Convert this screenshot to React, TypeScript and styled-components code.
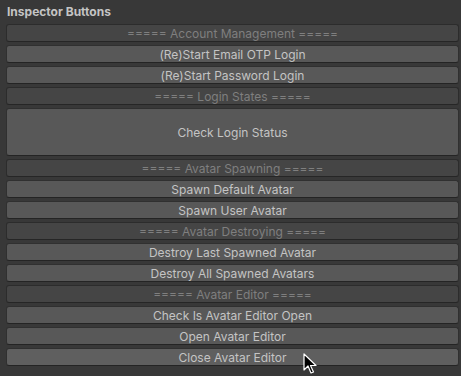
import styled, { createGlobalStyle } from "styled-components";

const GlobalStyle = createGlobalStyle`
  html, body {
    margin: 0;
    padding: 0;
    background: #383838;
  }
  body {
    font-family: Inter, "Noto Sans", sans-serif;
  }
`;

type Row = { text: string; kind: "label" | "button" | "big"; hover?: boolean };

const rows: Row[] = [
  { text: "===== Account Management =====", kind: "label" },
  { text: "(Re)Start Email OTP Login", kind: "button" },
  { text: "(Re)Start Password Login", kind: "button" },
  { text: "===== Login States =====", kind: "label" },
  { text: "Check Login Status", kind: "big" },
  { text: "===== Avatar Spawning =====", kind: "label" },
  { text: "Spawn Default Avatar", kind: "button" },
  { text: "Spawn User Avatar", kind: "button" },
  { text: "===== Avatar Destroying =====", kind: "label" },
  { text: "Destroy Last Spawned Avatar", kind: "button" },
  { text: "Destroy All Spawned Avatars", kind: "button" },
  { text: "===== Avatar Editor =====", kind: "label" },
  { text: "Check Is Avatar Editor Open", kind: "button" },
  { text: "Open Avatar Editor", kind: "button" },
  { text: "Close Avatar Editor", kind: "button", hover: true },
];

const Cursor = () => (
  <CursorWrap>
    <svg width="14" height="22" viewBox="0 0 14 22">
      <path
        d="M1 1 L1 17 L5 13 L8 20 L10.5 19 L7.5 12.5 L13 12.5 Z"
        fill="#000"
        stroke="#fff"
        strokeWidth="1.2"
        strokeLinejoin="round"
      />
    </svg>
  </CursorWrap>
);

export default function App() {
  return (
    <>
      <GlobalStyle />
      <Panel>
        <Header>Inspector Buttons</Header>
        <List>
          {rows.map((r) => (
            <Button key={r.text} $kind={r.kind} $hover={!!r.hover}>
              {r.text}
            </Button>
          ))}
        </List>
        <Cursor />
      </Panel>
    </>
  );
}

const Panel = styled.div`
  position: relative;
  width: 461px;
  height: 376px;
  box-sizing: border-box;
  padding: 4px 2px 0 6px;
  background: #383838;
  overflow: hidden;
`;

const Header = styled.div`
  height: 20px;
  padding-left: 1px;
  font-size: 12px;
  font-weight: 700;
  line-height: 16px;
  color: #c4c4c4;
`;

const List = styled.div`
  display: flex;
  flex-direction: column;
  gap: 3px;
  width: 453px;
`;

const Button = styled.div<{ $kind: "label" | "button" | "big"; $hover: boolean }>`
  height: ${(p) => (p.$kind === "big" ? 48 : 18)}px;
  box-sizing: border-box;
  display: flex;
  align-items: center;
  justify-content: center;
  border-radius: 3px;
  font-size: 12px;
  color: ${(p) => (p.$kind === "label" ? "#7f7f7f" : "#c4c4c4")};
  background: ${(p) =>
    p.$kind === "label" ? "#454545" : p.$hover ? "#5f5f5f" : "#585858"};
  border: 1px solid ${(p) => (p.$kind === "label" ? "#2c2c2c" : "#303030")};
  border-bottom-color: ${(p) => (p.$kind === "label" ? "#262626" : "#242424")};
  white-space: nowrap;
`;

const CursorWrap = styled.div`
  position: absolute;
  left: 303px;
  top: 353px;
  width: 14px;
  height: 22px;
`;
